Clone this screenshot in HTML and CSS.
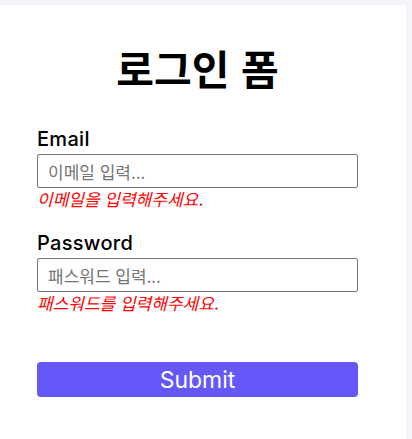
FILE: index.html
```html
<!DOCTYPE html>
<html lang="ko">
<head>
<meta charset="utf-8">
<link rel="stylesheet" href="styles.css">
</head>
<body>
<div class="card">
  <h1 class="title">로그인 폼</h1>
  <form class="form">
    <div class="field">
      <label class="label">Email</label>
      <input class="input" type="text" placeholder="이메일 입력...">
      <p class="error">이메일을 입력해주세요.</p>
    </div>
    <div class="field">
      <label class="label">Password</label>
      <input class="input" type="password" placeholder="패스워드 입력...">
      <p class="error">패스워드를 입력해주세요.</p>
    </div>
    <button class="submit" type="button">Submit</button>
  </form>
</div>
</body>
</html>
```
FILE: styles.css
```css
html, body {
  margin: 0;
  padding: 0;
  background: #f4f5f8;
  height: 100%;
}
body {
  padding-top: 5px;
  box-sizing: border-box;
  font-family: "Noto Sans", "Noto Sans CJK KR", sans-serif;
}
.card {
  width: 406px;
  min-height: 434px;
  background: #ffffff;
  box-sizing: border-box;
  padding: 0 48px 0 37px;
  overflow: hidden;
}
.title {
  margin: 34px 0 0;
  text-align: center;
  font-family: "Noto Sans CJK KR", sans-serif;
  font-weight: 700;
  font-size: 41px;
  line-height: 56px;
  color: #000;
}
.form {
  display: flex;
  flex-direction: column;
  margin-top: 32px;
}
.field {
  display: flex;
  flex-direction: column;
  margin-bottom: 21px;
}
.label {
  font-family: "Inter", sans-serif;
  font-weight: 500;
  font-size: 20px;
  letter-spacing: 0.3px;
  line-height: 24px;
  color: #000;
  margin-bottom: 3px;
}
.input {
  box-sizing: border-box;
  width: 321px;
  height: 34px;
  border: 1px solid #767676;
  border-radius: 2px;
  padding: 0 10px;
  font-family: "Noto Sans CJK KR", sans-serif;
  font-size: 17px;
  color: #000;
  outline: none;
}
.input::placeholder {
  color: #757575;
}
.error {
  margin: 0;
  font-family: "Noto Sans CJK KR", sans-serif;
  font-style: italic;
  font-size: 17px;
  line-height: 22px;
  color: #ff0000;
}
.submit {
  margin-top: 27px;
  width: 321px;
  height: 35px;
  border: none;
  border-radius: 4px;
  background: #6558f8;
  color: #ffffff;
  font-family: "Inter", sans-serif;
  font-size: 23px;
  padding: 0;
}
```
